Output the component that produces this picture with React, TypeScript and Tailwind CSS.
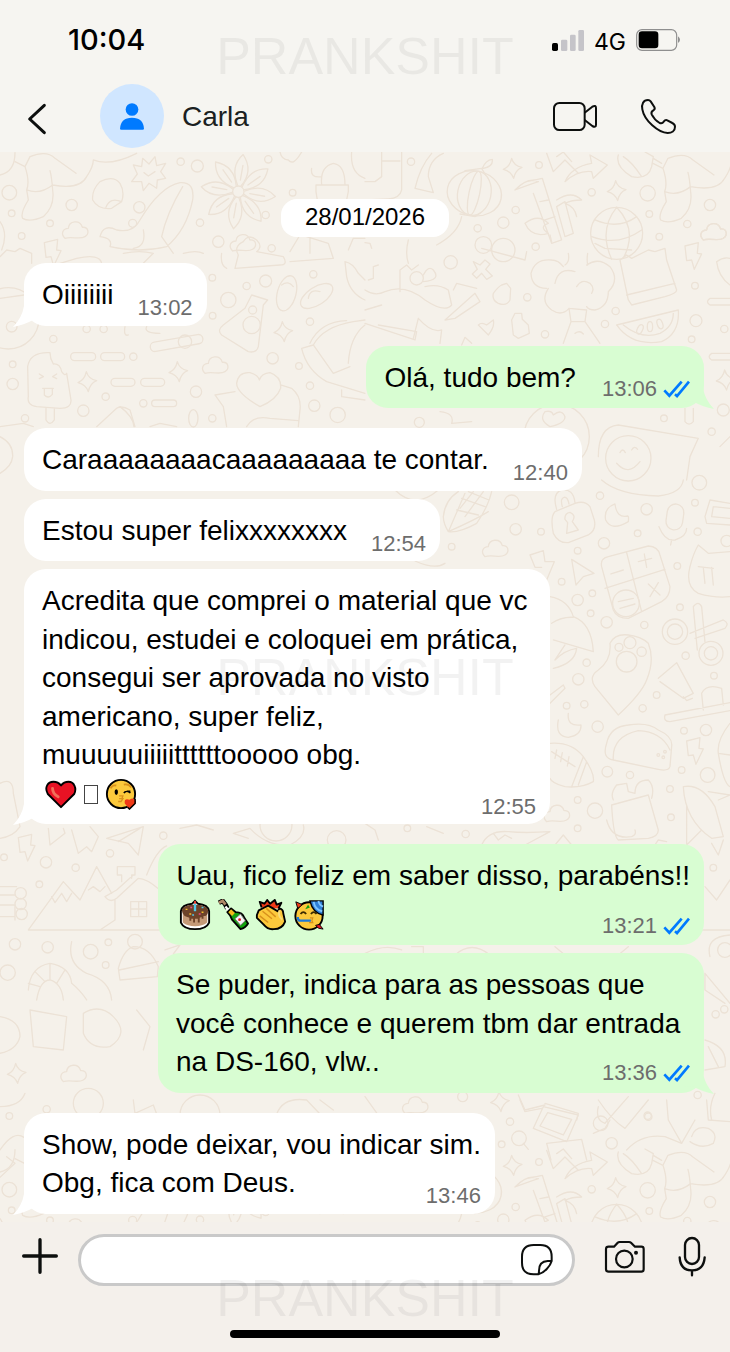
import type { ReactNode } from "react";
import clsx from "clsx";

type EmojiName = "heart" | "missing" | "kiss" | "cake" | "bottle" | "clap" | "party";

interface Message {
  id: number;
  sent?: boolean;
  tail?: boolean;
  wide?: boolean;
  text: string;
  emojis?: EmojiName[];
  time: string;
}

const messages: Message[] = [
  { id: 1, tail: true, text: "Oiiiiiiii", time: "13:02" },
  { id: 2, sent: true, tail: true, text: "Olá, tudo bem?", time: "13:06" },
  { id: 3, wide: true, text: "Caraaaaaaaacaaaaaaaaa te contar.", time: "12:40" },
  { id: 4, text: "Estou super felixxxxxxxx", time: "12:54" },
  {
    id: 5,
    tail: true,
    text: "Acredita que comprei o material que vc indicou, estudei e coloquei em prática, consegui ser aprovada no visto americano, super feliz, muuuuuiiiiittttttooooo obg.",
    emojis: ["heart", "missing", "kiss"],
    time: "12:55",
  },
  {
    id: 6,
    sent: true,
    text: "Uau, fico feliz em saber disso, parabéns!!",
    emojis: ["cake", "bottle", "clap", "party"],
    time: "13:21",
  },
  {
    id: 7,
    sent: true,
    tail: true,
    text: "Se puder, indica para as pessoas que você conhece e querem tbm dar entrada na DS-160, vlw..",
    time: "13:36",
  },
  { id: 8, tail: true, text: "Show, pode deixar, vou indicar sim.\nObg, fica com Deus.", time: "13:46" },
];

/* ---------- Wallpaper ---------- */

type Dot = [number, number, number];

function Scene({ x, y, dots = [], d = "", children }: { x: number; y: number; dots?: Dot[]; d?: string; children?: ReactNode }) {
  return (
    <g transform={`translate(${x} ${y}) scale(.3333)`}>
      {dots.map(([cx, cy, r]) => (
        <circle key={`${cx}-${cy}-${r}`} cx={cx} cy={cy} r={r} />
      ))}
      <path d={d} />
      {children}
    </g>
  );
}

const Sparkle = ({ x, y }: { x: number; y: number }) => (
  <path transform={`translate(${x} ${y})`} d="M-3-30Q3-8 28-3 8 5 3 30-5 8-28 3-8-5-3-30Z" />
);

const Cloud = ({ x, y }: { x: number; y: number }) => (
  <path transform={`translate(${x} ${y})`} d="M-30 25C-45 10-35-5-20-5-18-28 15-32 22-8 40-10 45 10 30 20 15 30-10 18-30 25Z" />
);

const Bolt = ({ x, y }: { x: number; y: number }) => (
  <path transform={`translate(${x} ${y})`} d="M-25-32 15-42 12-10 25-8 3 38-5 10-20 12Z" />
);

const Dog = () => (
  <path d="M45 485 75 500 90 470Q140 450 165 475 200 500 228 520M75 500Q90 545 80 570L85 600Q60 640 68 655 90 668 130 650 165 620 158 570 155 530 150 512M80 570Q120 585 158 555 240 570 260 530 280 500 280 480M280 480Q330 500 410 460" />
);

function TopBand({ y }: { y: number }) {
  return (
    <>
      <Scene
        x={0}
        y={y}
        dots={[[542, 485, 11], [592, 498, 18], [28, 578, 22], [215, 615, 17], [35, 640, 10], [150, 670, 10], [65, 708, 10], [418, 622, 17], [398, 670, 12], [805, 478, 11], [878, 578, 10], [600, 668, 11], [797, 645, 11], [815, 745, 11]]}
        d="M0 525Q45 515 45 458M400 495 425 500 428 475 447 492 465 470 470 497 497 490 482 515 497 535 472 540 470 565 447 550 430 572 425 545 395 545 412 522ZM432 518 445 528 465 515M300 545Q340 525 360 550 375 575 365 605L335 625Q295 630 278 600 275 570 300 545M365 605Q330 590 318 622M300 710Q310 670 350 690 400 700 420 660 480 560 540 548 585 545 578 600 560 690 500 740 420 760 330 740 340 715 300 710M548 560Q500 640 485 710L520 760M430 690Q440 740 400 745M948 555H1045V575L1030 650M948 555V575L960 650M965 553Q960 500 1000 490 1035 495 1035 553M965 530Q930 535 935 505M1055 456Q1050 520 1095 535M840 456Q845 480 865 480 880 500 905 456M0 665Q25 700 5 750"
      >
        <Dog />
        <Cloud x={225} y={690} />
        <Cloud x={728} y={728} />
        <g transform="translate(715 575)">
          <circle r="17" />
          {[10, 55, 100, 145, 190, 235, 280, 325].map((a) => (
            <path key={a} transform={`rotate(${a})`} d="M-5-18Q-38-70-5-112 35-70 5-18M0-35V-80" />
          ))}
        </g>
      </Scene>
      <Scene
        x={365}
        y={y}
        dots={[[138, 485, 11], [522, 495, 10], [680, 577, 11], [848, 580, 23], [452, 630, 11], [415, 668, 17], [338, 685, 11], [1035, 615, 17], [853, 642, 10], [967, 672, 11], [883, 710, 10], [355, 735, 25], [415, 750, 35]]}
        d="M0 545H30L50 530V456M110 456V570Q105 595 70 597L0 600M50 483H105M235 460Q190 480 190 530L205 578 150 565Q165 500 200 460M300 512 350 505 362 525M355 505Q385 500 382 478 362 480 352 505M285 642 330 650 345 640M290 650Q280 700 215 735M485 545 532 535 590 720 560 730 505 580M525 605 550 600M540 660 570 650M450 570Q490 530 520 545 490 555 450 570M600 710 575 620 600 605 625 700ZM575 600Q620 570 650 600 620 600 600 610 630 620 635 650M480 670Q520 640 550 670 520 680 550 700 500 715 480 670M545 460 565 515 600 480 640 520M575 470 595 456 620 485M600 545Q620 500 680 490L675 465 727 495 685 535 680 515Q640 510 600 545M760 465Q750 500 800 530 850 540 860 500L865 470 840 456M775 470Q800 485 830 530M865 475 890 490M690 660Q760 690 815 650M680 710Q760 740 830 690M755 622Q700 690 740 778M755 622Q820 690 775 775"
      >
        <g transform="translate(819 5)">
          <Dog />
        </g>
        <g transform="rotate(12 328 580)">
          <ellipse cx="328" cy="580" rx="82" ry="67" />
          <ellipse cx="328" cy="580" rx="50" ry="67" />
          <ellipse cx="328" cy="580" rx="16" ry="67" />
        </g>
        <circle cx="755" cy="700" r="78" />
        <Sparkle x={443} y={505} />
        <Sparkle x={755} y={572} />
        <Cloud x={1045} y={695} />
      </Scene>
    </>
  );
}

function Wallpaper() {
  return (
    <svg className="absolute inset-0 h-full w-full" aria-hidden="true">
      <defs>
        <pattern id="doodles" width="730" height="1070" patternUnits="userSpaceOnUse">
          <g transform="translate(0 -152)" fill="none" stroke="#ece2d6" strokeWidth="4" strokeLinejoin="round" strokeLinecap="round">
            <TopBand y={0} />
            <TopBand y={997} />
            <Scene
              x={0}
              y={230}
              dots={[[637, 143, 10], [740, 168, 11], [797, 153, 18], [940, 133, 11], [685, 210, 23], [638, 257, 10], [930, 275, 11], [818, 385, 17], [897, 408, 10], [930, 467, 11], [943, 527, 17], [1013, 555, 23], [655, 35, 17], [160, 327, 11], [38, 403, 10], [38, 462, 17], [317, 500, 11], [250, 542, 17], [588, 485, 17], [637, 565, 11], [75, 565, 11], [400, 380, 11], [430, 520, 11], [260, 297, 11], [311, 297, 11], [755, 285, 26], [758, 240, 12], [25, 265, 92], [35, 290, 16]]}
              d="M85 500 83 410Q90 365 150 368 150 385 160 402 180 400 185 425 195 440 200 430L213 510Q215 535 180 535L110 530Q80 525 85 500M138 535V570Q150 590 163 570V535M118 432 130 440 118 446M170 432 158 440 170 446M128 475H160M133 478V495Q145 508 157 493V475M755 195 803 210 790 225 775 350Q770 370 745 365L665 315Q650 300 670 285L735 235ZM1035 95Q1060 100 1075 130L1095 150M1040 140Q1050 190 1095 210M1035 95 1040 140M705 115 715 75Q700 50 730 35 745 10 770 30 790 50 770 65L850 80Q865 105 840 105ZM665 70Q660 105 680 115M780 530Q710 490 710 460 715 425 750 428 775 435 778 450 785 430 810 428 845 440 842 475 830 510 780 530M645 495 705 485M842 465 875 475Q905 500 900 540L895 590M645 495 670 530 680 590M740 590Q760 555 810 565L895 572M905 355 940 345Q970 290 1060 275L1095 270M905 355Q920 420 980 455L1095 490M940 345 1000 430 1050 410M1045 400Q1050 320 1095 285M930 340Q960 275 1040 272M1025 480V500L1095 510M290 590 350 535Q365 525 390 540L405 590M360 530Q400 560 402 590M0 80 20 60 45 65 60 55 95 70V100M0 590 70 580 100 590M0 620Q40 640 38 680 35 710 0 730M370 70Q420 60 460 70L430 100M550 70Q590 60 610 70M870 65 900 15 920 20 985 40 1000 85 870 95M930 20V70M1045 60 1060 25H1095M375 290Q370 320 385 315M440 290Q430 310 480 310M180 100 230 85Q300 70 305 100M0 205 72 195M450 590 480 580 530 590"
            >
              <rect x="212" y="368" width="75" height="24" rx="12" />
              <rect x="302" y="368" width="72" height="24" rx="12" />
              <rect x="333" y="445" width="72" height="24" rx="12" />
              <rect x="422" y="445" width="72" height="24" rx="12" />
              <rect x="455" y="510" width="75" height="20" rx="10" />
              <rect x="450" y="325" width="160" height="28" rx="14" transform="rotate(-10 530 340)" />
              <circle cx="555" cy="335" r="20" />
              <ellipse cx="860" cy="190" rx="28" ry="54" transform="rotate(15 860 190)" />
              <ellipse cx="950" cy="198" rx="55" ry="27" transform="rotate(-33 950 198)" />
              <ellipse cx="580" cy="565" rx="14" ry="26" />
              <path d="M845 165Q865 150 880 170M925 205Q930 175 960 185" />
              <Sparkle x={262} y={455} />
              <Sparkle x={535} y={425} />
              <Sparkle x={850} y={305} />
              <Cloud x={645} y={405} />
              <Bolt x={158} y={70} />
            </Scene>
            <Scene
              x={365}
              y={230}
              dots={[[257, 97, 20], [512, 50, 11], [487, 202, 11], [752, 243, 11], [720, 282, 11], [540, 313, 11], [993, 272, 18], [980, 328, 10], [1078, 297, 11], [990, 167, 10], [163, 577, 15], [897, 565, 10], [1075, 540, 18], [1040, 605, 11], [155, 145, 20], [575, 620, 98], [790, 685, 68]]}
              d="M545 175Q500 175 498 130 510 85 560 90 580 90 595 110M610 70Q615 95 600 105M668 70Q665 90 668 105M550 175Q525 215 560 240 590 260 612 235M570 160Q580 110 630 125M635 170Q650 145 675 160 690 175 680 190M665 105Q700 80 735 110 765 150 730 185M730 185Q730 230 690 240 670 240 665 230M612 235 665 240 660 275H618ZM618 275 595 340M660 275 705 340M630 310Q645 300 655 312M765 90 785 75 800 85 850 60 870 65 900 55 905 90 935 180Q935 190 900 200L800 225 790 210ZM785 195 930 160M755 285 940 240Q945 310 890 335 800 350 755 285M775 285Q830 330 885 310 925 290 925 250M325 95 345 105 360 90 375 102 362 118 382 138 365 148 350 130 335 145 322 132 337 118ZM385 190Q400 170 410 165L425 160 437 175 435 210Q425 230 400 220 380 210 385 190M440 270 450 250H470L472 268 490 285 493 310 460 325 445 315ZM340 285Q350 275 365 285L385 270Q390 290 370 315ZM290 345 300 322 320 340M0 180Q30 200 60 185 120 160 180 210 240 250 260 225L250 180Q220 160 180 170M105 185V120L125 105 140 120 160 105M130 30Q120 70 130 100M175 155Q230 150 205 120 190 105 175 135M240 270 330 190 345 215 270 265ZM265 180 275 160 335 175M160 265Q200 310 230 300L225 340M160 265 145 325M0 280 150 330 155 305 40 285M0 240 50 225M0 38 15 40 20 55M1095 205H1035Q1020 215 1035 225H1095M1095 370H1040Q1025 380 1040 390H1095M960 535V575Q972 590 985 575V535M700 680Q700 590 760 585L1000 625 975 680 965 750M765 668Q773 652 781 668M800 660Q808 645 818 658M755 700Q790 740 825 695M555 590Q520 570 540 545 560 540 565 555 590 535 600 560 600 580 555 590M225 545Q270 550 260 580L320 575M1065 650 1095 620M1055 95Q1075 80 1095 85M1055 95Q1060 140 1095 165M10 150 25 145V110L40 105M560 35 555 15M690 40 720 55 800 60M350 55 480 90 485 65"
            >
              <Sparkle x={1082} y={450} />
              <Bolt x={985} y={80} />
              <Cloud x={1045} y={5} />
              <ellipse cx="825" cy="298" rx="8" ry="15" transform="rotate(25 825 298)" />
              <ellipse cx="855" cy="290" rx="8" ry="15" />
              <ellipse cx="885" cy="282" rx="8" ry="15" transform="rotate(-20 885 282)" />
            </Scene>
            <Scene
              x={365}
              y={480}
              dots={[[440, 67, 22], [452, 148, 17], [528, 155, 10], [705, 47, 11], [845, 88, 17], [990, 68, 10], [818, 160, 10], [998, 155, 11], [717, 190, 17], [638, 212, 10], [260, 200, 10], [937, 258, 10], [590, 305, 10], [638, 360, 17], [682, 340, 10], [677, 400, 10], [725, 427, 17], [838, 435, 11], [945, 382, 10], [665, 548, 11], [640, 598, 17], [605, 677, 10], [658, 673, 11], [962, 527, 11], [1047, 587, 10], [875, 645, 10], [833, 685, 11], [698, 740, 17], [1003, 8, 22], [1085, 183, 17], [930, 455, 38], [930, 455, 23], [1038, 520, 36], [1038, 520, 20], [785, 545, 31], [795, 488, 18], [830, 515, 14], [762, 502, 12], [783, 370, 40]]}
              d="M235 110Q240 60 280 35M380 35Q370 80 335 130 280 160 250 155 235 130 235 110M250 155 300 40M250 155Q330 120 370 95M290 55 360 80M310 35 372 60M275 90 340 105M355 35 300 110M325 35 285 85M570 95Q555 110 565 160 580 190 610 188L670 165Q695 150 688 120L675 80Q660 60 630 70ZM575 88Q560 40 590 30 625 25 630 68M592 80Q585 55 597 52 608 50 612 72M608 128 605 160 640 150 622 125Q635 105 615 97 598 100 600 118ZM750 72Q715 85 722 120 740 155 790 125 792 108 788 108 755 115 750 72M882 140Q900 185 930 180 965 170 965 145M920 180 917 195M495 225 535 212 540 245 568 245 545 300M495 225 510 262 530 262M620 238 687 280 655 290 633 315ZM710 260Q705 235 730 230L850 198Q880 200 885 225L915 320Q915 350 890 365L790 415Q755 415 745 390ZM785 218 830 395M720 325 900 268M738 282 775 270M838 222 845 262M820 245 860 235M850 312 885 345M880 308 855 350M760 365 805 355M765 385 810 372M975 260Q985 220 1000 195L1030 220 1095 215M975 260Q960 320 1000 340 1050 355 1095 350M1000 260 1045 265M1015 262 1020 310M1040 262 1045 315M975 460 1075 420Q1095 430 1080 445L990 475M985 380Q1000 360 1010 380L1020 485M985 380 997 510M555 350Q610 360 625 410 680 430 685 515L565 480M560 430Q590 410 625 412M570 540Q600 510 635 505 630 550 565 565M600 495 570 540M735 490Q750 460 790 465 830 470 850 490 870 540 845 600 830 640 760 705L690 620Q670 590 700 570 740 540 735 490M880 595 935 548 985 640 955 655 885 605M955 650 965 662 982 655M900 705 1095 668M900 705Q895 725 915 725L1095 692M1015 690 1010 640Q1025 610 1070 625L1075 675M555 645 595 615 600 625 555 670M1020 110 1035 60 1095 70M1020 110 1025 130 1095 135M1045 80 1095 85M1045 80 1040 110 1095 115M710 0Q760 45 880 48 950 40 955 0M90 30Q150 90 220 30M150 243Q210 270 240 250"
            >
              <rect x="905" y="72" width="50" height="78" rx="25" transform="rotate(8 930 110)" />
              <Cloud x={390} y={205} />
            </Scene>
            <Scene
              x={365}
              y={720}
              dots={[[957, 32, 10], [1023, 30, 17], [727, 155, 16], [795, 165, 11], [950, 150, 10], [1028, 165, 22], [915, 207, 10], [638, 240, 10], [690, 272, 23], [918, 292, 10], [638, 325, 10], [302, 342, 11], [127, 325, 10], [1045, 443, 10], [880, 105, 4], [900, 95, 4], [895, 112, 4], [1080, 690, 22]]}
              d="M745 120Q710 115 725 70 735 20 790 15 850 5 880 30 925 50 920 80L915 140Q910 155 880 148L745 120Q740 50 820 32 890 35 915 90M555 70Q620 65 655 110 690 160 685 185 650 205 600 200 560 190 555 175M560 95 630 140M575 90 570 115M592 98 587 125M612 110 607 138M655 110 620 200M665 125 640 195M580 0Q570 50 610 52 650 45 648 15 605 20 610-20M740 255 850 225 880 330Q880 350 850 355L760 360Q745 350 740 255ZM745 240Q735 220 755 195L785 190 790 215 810 220Q810 180 850 180 870 200 860 235M725 300Q740 360 800 350 815 345 810 330M955 200Q1010 190 1050 260L1075 350 1040 355Q960 300 955 200M965 255V375L1010 330M1060 240 1095 225M1030 215 1095 225M1040 370 1060 405 1075 360M350 375Q370 330 430 335 480 340 555 335L480 375M385 340 400 360 420 345 440 355M570 375 595 345 620 375M1095 10Q1055 60 1060 100 1075 190 1095 200M1060 100 1095 105M1010 630H1095M1020 500 1055 540 1095 480M1035 710Q1020 650 1095 645M870 375 880 360 905 365M185 320 235 340M0 310 30 330 40 360M0 700Q60 670 110 690M140 680H175V705M270 705Q320 660 375 705M570 680 600 705M760 705 790 680"
            >
              <Bolt x={990} y={95} />
              <Cloud x={575} y={280} />
            </Scene>
            <Scene
              x={0}
              y={750}
              dots={[[490, 257, 11], [138, 337, 17], [227, 353, 11], [12, 322, 10], [330, 310, 11], [118, 403, 10], [45, 583, 17], [143, 592, 17], [272, 605, 22], [325, 577, 10], [317, 645, 10], [23, 668, 23], [828, 225, 48], [1010, 270, 28], [405, 575, 22], [62, 430, 17], [62, 462, 17], [65, 492, 17]]}
              d="M85 540 190 395 240 450 290 350 335 430M85 540H480M155 440 165 458 185 430 200 455 215 430M265 420 280 410 300 425 315 410M315 440Q330 460 350 445L415 385Q440 385 480 420M315 440 350 420 400 375M345 450V510L300 540M365 395V375H352V350H405V375H395V385M392 455H440V500H392ZM416 455V500M392 477H440M320 265 430 230 415 315 385 280ZM355 275 420 235M145 235 150 285 195 250 190 235M215 240 235 310 260 290 275 305 295 260 270 230M700 250 750 235Q800 290 870 285 920 260 910 225M700 250 745 265M0 100Q40 80 40 130L60 230Q40 260 0 265M0 410H50M0 435H45M0 465H45V510M0 500H45M85 720Q90 650 150 640 210 650 215 700 240 720 260 750M110 750Q120 690 150 690 185 700 190 750M85 700 120 710M105 665 135 695M150 640V690M195 660 170 700M355 655Q370 600 400 590 450 590 475 650L472 680 360 690ZM358 660 475 635M215 575Q200 640 260 670 330 690 335 750M440 375Q470 300 500 288M540 235 590 225 640 240M495 600 540 585 520 612M0 800Q60 810 60 860 50 900 0 910M90 780 200 800 190 900 100 890ZM250 790Q300 760 340 800 390 850 330 890 270 900 250 850ZM410 780 450 830 430 900"
            >
              <Bolt x={80} y={295} />
              <Sparkle x={50} y={970} />
              <Cloud x={220} y={970} />
            </Scene>
            <Scene
              x={0}
              y={1100}
              dots={[[28, 48, 10], [265, 10, 45], [600, 45, 60], [140, 28, 11]]}
              d="M400 0 405 40 460 15 470 42M830 42Q850-10 920 0L960 42M960 0 1000 30M0 150Q40 90 72 112M0 232 45 190 20 170M0 20Q60 20 75-20"
            />
            <Scene
              x={365}
              y={920}
              dots={[[1078, 268, 11], [1052, 283, 11], [998, 525, 11], [850, 590, 11], [293, 530, 15]]}
              d="M1020 160 1095 250M1020 160V210L1080 250M1020 360Q1090 380 1080 440L1020 450M1030 380 1060 440M1050 520Q1030 560 1040 600M460 525 480 570 540 555M540 550 640 580 635 600M700 560Q690 600 720 610L790 530M0 530 50 600"
            >
              <Cloud x={150} y={555} />
              <Sparkle x={405} y={545} />
            </Scene>
            <Scene
              x={365}
              y={1100}
              dots={[[435, 65, 11], [410, 133, 10], [740, 130, 17], [848, 47, 11], [462, 115, 22], [707, 70, 22]]}
              d="M535 20 640 45 605 125 505 85ZM548 38 620 58 595 105 525 78ZM475 130 490 148M545 130 650 118 665 180M545 130 558 180M465 0 480 35 530 25M700 0Q740 60 780 85L850 0M685 100 720 85 735 60M905 0 910 60 950 130 990 60M1025 0 1030 60 1095 65M980 110Q990 75 1030 85 1060 100 1045 130 1010 150 975 125M785 150Q830 100 900 110L950 130"
            />
          </g>
        </pattern>
      </defs>
      <rect width="100%" height="100%" fill="url(#doodles)" />
    </svg>
  );
}

/* ---------- Emojis ---------- */

const emojiArt: Record<Exclude<EmojiName, "missing">, { label: string; art: ReactNode }> = {
  heart: {
    label: "❤️",
    art: (
      <>
        <path d="M17 31 3 17C-1 10 3 4 9 4Q14 4 17 8 20 4 25 4C31 4 34 11 31 17Z" fill="#e81224" stroke="#000" strokeWidth="2" strokeLinejoin="round" />
        <path d="M8 11Q8 17 14 20" stroke="#f0705a" strokeWidth="3" fill="none" strokeLinecap="round" />
      </>
    ),
  },
  kiss: {
    label: "😘",
    art: (
      <>
        <circle cx="17" cy="17" r="15" fill="#fcc93c" stroke="#000" strokeWidth="2" />
        <path d="M6 11Q8 7 12 8M20 7Q25 6 28 10" stroke="#d8901c" strokeWidth="2" fill="none" />
        <ellipse cx="12" cy="15" rx="1.8" ry="3" />
        <path d="M20 16Q23 12 27 16M23 14H27" stroke="#000" strokeWidth="1.6" fill="none" />
        <path d="M15 19H19L18 22H15M15 22H19L17 25H14" stroke="#d8901c" strokeWidth="1.4" fill="none" />
        <path d="M26 33 21 27Q20 21 26 23 31 20 33 25L32 28Z" fill="#f03a17" />
        <path d="m24 31 2 2 6-6V22" stroke="#000" strokeWidth="1.6" fill="none" />
      </>
    ),
  },
  cake: {
    label: "🎂",
    art: (
      <>
        <path d="M2 13Q3 6 14 5L17 2 20 5Q31 6 32 13V25Q29 32 17 32 5 32 2 25Z" fill="#fff" stroke="#000" strokeWidth="2" />
        <path d="M4 15H30V25Q25 29 17 29 9 29 4 25Z" fill="#c59a78" />
        <path d="M3 12Q4 6 17 6 30 6 31 12 31 17 28 18H26V21H24V19L22 20V25H20V21H17V25H15V21H13V23H11V20L6 18Q3 15 3 12Z" fill="#6d432a" />
        <path d="M17 5V13" stroke="#50c8e8" strokeWidth="2.5" />
        <path d="M17 2V5" stroke="#e83a2d" strokeWidth="2" />
        <path d="M7 11H9M24 14H26M11 16H13" stroke="#f5c02c" strokeWidth="1.5" />
        <path d="M12 9H14M21 16H23" stroke="#e74b87" strokeWidth="1.5" />
        <path d="M24 9H26M14 17H16" stroke="#50c8e8" strokeWidth="1.5" />
      </>
    ),
  },
  bottle: {
    label: "🍾",
    art: (
      <>
        <path d="M2 4 6 2 9 6 11 10" stroke="#000" strokeWidth="5" fill="none" strokeLinejoin="round" />
        <path d="M2 4 6 2 9 6" stroke="#b08968" strokeWidth="3" fill="none" />
        <path d="M9 8 13 13" stroke="#fff" strokeWidth="2.5" />
        <path d="M11 14 15 10 20 14Q27 14 29 20L33 26Q30 31 25 32L16 22Q15 18 11 14Z" fill="#13a10e" stroke="#000" strokeWidth="2" strokeLinejoin="round" />
        <path d="M12 14 15 11 19 15 16 18Z" fill="#f5b81c" />
        <path d="m19 21 6-5 5 7-5 5Z" fill="#f5f5f5" stroke="#777" strokeWidth="1" />
        <circle cx="24" cy="22" r="1.5" fill="#e81224" />
      </>
    ),
  },
  clap: {
    label: "👏",
    art: (
      <>
        <path d="M7 9 5 3 10 5 13 1 16 5 21 1 23 6 28 4 25 10" fill="#f03a17" stroke="#000" strokeWidth="2" strokeLinejoin="round" />
        <path d="M2 17 4 12 10 9 14 7 19 10 24 13 26 10Q30 11 30 15L32 24Q29 32 20 32 14 33 9 27L2 20Z" fill="#fcc93c" stroke="#000" strokeWidth="2" strokeLinejoin="round" />
        <path d="M8 13 18 21M12 10 22 19M5 18 14 25" stroke="#d8901c" strokeWidth="1.6" />
        <path d="M26 12Q24 18 29 22" stroke="#f8dc7c" strokeWidth="2" fill="none" />
      </>
    ),
  },
  party: {
    label: "🥳",
    art: (
      <>
        <circle cx="17" cy="18" r="14.5" fill="#fcc93c" stroke="#000" strokeWidth="2" />
        <path d="M18 2H32V17Q21 15 18 2Z" fill="#2f80d8" stroke="#000" strokeWidth="1.5" />
        <path d="M22 3Q23 11 31 13M27 2Q28 7 32 8" stroke="#7cc4ff" strokeWidth="2" fill="none" />
        <path d="m3 3 7 3-5 4Z" fill="#f03a17" stroke="#000" />
        <path d="m13 11 3-5 2 3Z" fill="#16a20f" />
        <path d="M8 16Q11 12 14 16M19 16Q22 12 25 16" stroke="#3d2b00" strokeWidth="1.8" fill="none" />
        <path d="M19 23H8Q5 23 5 19" stroke="#1d7ad9" strokeWidth="2.5" fill="none" />
        <path d="M18 20H21L20 23 21 25H17" stroke="#d8901c" strokeWidth="1.3" fill="none" />
        <path d="m24 28 4-1 4 5-5-1Z" fill="#e81224" stroke="#000" />
      </>
    ),
  },
};

function Emoji({ name }: { name: EmojiName }) {
  if (name === "missing") return <span className="mx-1 inline-block h-[19px] w-[14px] border border-[#444] align-[-1px]" />;
  const { label, art } = emojiArt[name];
  return (
    <svg viewBox="0 0 34 34" role="img" aria-label={label} className="mx-[3px] inline-block h-8 w-8 align-[-7px]">
      {art}
    </svg>
  );
}

/* ---------- Bubbles ---------- */

function Ticks() {
  return (
    <svg viewBox="895 444 81 54" className="h-[18px] w-[27px]" fill="none" stroke="#007aff" strokeWidth="8" aria-hidden="true">
      <path d="M899 475 914 491 951 449M931 487 937 492 973 449" />
    </svg>
  );
}

function Tail({ sent }: { sent?: boolean }) {
  return (
    <svg
      viewBox="0 0 30 26"
      aria-hidden="true"
      className={clsx("absolute -bottom-px h-[26px] w-[30px]", sent ? "-right-[10px] -scale-x-100" : "-left-[11px]")}
    >
      <path d="M11 0V5Q9 17 0 26 11 24 20 19L30 18V0Z" fill={sent ? "#d8fdd2" : "#fff"} />
    </svg>
  );
}

function Bubble({ message }: { message: Message }) {
  const { sent, tail, wide, text, emojis, time } = message;
  return (
    <li
      className={clsx(
        "relative rounded-[22px] pt-[13px] pr-[14px] pb-[11px] pl-[18px]",
        sent ? "max-w-[546px] self-end bg-[#d8fdd2]" : "self-start bg-white",
        !sent && (wide ? "max-w-[562px]" : "max-w-[526px]"),
        tail ? "mb-5 last:mb-0" : "mb-2",
      )}
    >
      {tail && <Tail sent={sent} />}
      <div className="relative text-[28px] leading-snug whitespace-pre-line text-black">
        {text}
        {emojis && <br />}
        {emojis?.map((name) => (
          <Emoji key={name} name={name} />
        ))}
        <span
          className={clsx(
            "float-right -mb-3 flex items-center gap-[6px] text-[22px] leading-6 text-[#6d6d6d]",
            sent ? "mt-[18px] ml-[26px]" : "mt-5 ml-6",
          )}
        >
          <time>{time}</time>
          {sent && <Ticks />}
        </span>
      </div>
    </li>
  );
}

/* ---------- Bars ---------- */

function StatusBar() {
  return (
    <div className="flex h-20 items-center justify-between pr-[50px] pl-[68px] font-['Inter',sans-serif] text-black">
      <span className="text-[29px] font-medium">10:04</span>
      <div className="flex items-center">
        <svg viewBox="561 90 96 63" className="h-[21px] w-8" fill="#c5c4c9" aria-hidden="true">
          <rect x="561" y="129" width="18" height="24" rx="5" fill="#000" />
          <rect x="588" y="119" width="19" height="34" rx="4" />
          <rect x="615" y="104" width="17" height="49" rx="4" />
          <rect x="640" y="90" width="17" height="63" rx="4" />
        </svg>
        <span className="mt-1 mr-[10px] ml-[10px] text-[23px] leading-6">4G</span>
        <svg viewBox="813 90 132 66" className="h-[22px] w-11" aria-hidden="true">
          <rect x="815" y="92" width="120" height="62" rx="16" fill="none" stroke="#8f8f8f" strokeWidth="3.5" />
          <rect x="821" y="97" width="59" height="51" rx="10" />
          <path d="M939 112Q951 122 939 132Z" fill="#8f8f8f" />
        </svg>
      </div>
    </div>
  );
}

function ChatHeader() {
  return (
    <header className="bg-[#f6f5f1]">
      <StatusBar />
      <div className="flex h-[72px] items-center pr-[52px] pl-[27px]">
        <button aria-label="Voltar" className="pt-[6px]">
          <svg viewBox="81 309 60 96" className="h-8 w-5" fill="none" stroke="#0d0f0e" strokeWidth="9" strokeLinecap="round" strokeLinejoin="round">
            <path d="M133 316 89 357 133 398" />
          </svg>
        </button>
        <div className="ml-[53px] flex size-16 items-center justify-center rounded-full bg-[#d0e6ff]">
          <svg viewBox="357 304 78 86" className="h-[29px] w-[26px]" fill="#007aff" aria-hidden="true">
            <circle cx="396" cy="326" r="19" />
            <path d="M360 384Q362 351 396 351T432 384Q432 387 428 387H364Q360 387 360 384Z" />
          </svg>
        </div>
        <h1 className="ml-[18px] flex-1 pt-[2px] text-[28px] text-[#1b1f22]">Carla</h1>
        <div className="flex items-center gap-10">
          <button aria-label="Chamada de vídeo">
            <svg viewBox="558 300 144 99" className="h-[33px] w-12" fill="none" stroke="#0d0f0e" strokeWidth="6" strokeLinejoin="round">
              <rect x="567" y="309" width="92" height="81" rx="16" />
              <path d="M659 338 682 320Q693 314 693 324V374Q693 384 682 378L659 360" />
            </svg>
          </button>
          <button aria-label="Chamada de voz">
            <svg viewBox="822 291 117 117" className="size-[39px]" fill="none" stroke="#0d0f0e" strokeWidth="6" strokeLinejoin="round">
              <path d="M849 300C835 300 829 312 832 328 838 362 880 398 908 399 920 399 930 393 930 380 930 374 926 371 922 369L907 361C903 359 899 361 896 365 893 370 889 371 884 369 874 363 866 355 860 343 858 338 860 334 865 331 869 329 870 325 868 321L857 304Q854 300 849 300Z" />
            </svg>
          </button>
        </div>
      </div>
    </header>
  );
}

function Composer() {
  return (
    <footer className="bg-[#f4f0eb] pt-3">
      <form className="flex items-start pr-[23px] pl-[22px]" onSubmit={(e) => e.preventDefault()}>
        <button type="button" aria-label="Anexar" className="flex h-11 items-center">
          <svg viewBox="66 414 108 108" className="size-9" stroke="#0d0f0e" strokeWidth="10" strokeLinecap="round">
            <path d="M120 419V517M71 468H169" />
          </svg>
        </button>
        <div className="mr-[29px] ml-5 flex h-[52px] min-w-0 flex-1 items-center rounded-full border-[3px] border-[#c9c9c9] bg-white pr-[18px] pl-5">
          <input type="text" aria-label="Mensagem" className="min-w-0 flex-1 bg-transparent text-[28px] outline-none" />
          <button type="button" aria-label="Figurinhas">
            <svg viewBox="462 432 102 102" className="size-[34px]" fill="none" stroke="#0d0f0e" strokeWidth="6" strokeLinejoin="round">
              <path d="M517 526H503Q468 526 468 491V473Q468 438 503 438H523Q557 438 557 473V486C553 501 535 522 517 526ZM557 486H545Q519 487 519 515 519 522 517 526" />
            </svg>
          </button>
        </div>
        <button type="button" aria-label="Câmera" className="flex h-11 items-center">
          <svg viewBox="717 420 123 99" className="h-[33px] w-[41px]" fill="none" stroke="#0d0f0e" strokeWidth="6.5" strokeLinejoin="round">
            <path d="M723 508V447Q723 440 731 440H747L758 428Q760 426 764 426H792Q796 426 798 428L810 440H829Q836 440 836 447V508Q836 515 829 515H731Q723 515 723 508Z" />
            <circle cx="778" cy="477" r="25" />
            <circle cx="813" cy="458" r="6" fill="#0d0f0e" stroke="none" />
          </svg>
        </button>
        <button type="button" aria-label="Gravar áudio" className="ml-8 flex h-11 items-center">
          <svg viewBox="936 405 90 123" className="h-[41px] w-[30px]" fill="none" stroke="#0d0f0e" strokeWidth="7" strokeLinecap="round">
            <rect x="960" y="411" width="42" height="78" rx="21" />
            <path d="M944 469Q946 508 981 508T1019 469M981 508V523" />
          </svg>
        </button>
      </form>
      <div className="mx-auto mt-11 mb-[14px] h-2 w-[270px] rounded-full bg-black" />
    </footer>
  );
}

function Watermark() {
  return (
    <div className="pointer-events-none absolute inset-0 flex flex-col items-center justify-between pt-[30px] pb-7 text-[52px] leading-none text-black/5">
      <span>PRANKSHIT</span>
      <span>PRANKSHIT</span>
      <span>PRANKSHIT</span>
    </div>
  );
}

export default function App() {
  return (
    <div className="relative flex min-h-screen flex-col font-['Liberation_Sans',Arial,sans-serif]">
      <ChatHeader />
      <main className="relative flex-1 bg-[#f5f1ea] px-6 pt-[47px] pb-2">
        <Wallpaper />
        <div className="relative flex flex-col">
          <div className="mb-[26px] self-center rounded-2xl bg-white px-6 pb-[2px] text-[24px] leading-9 text-black">28/01/2026</div>
          <ul className="flex flex-col pr-[2px]">
            {messages.map((m) => (
              <Bubble key={m.id} message={m} />
            ))}
          </ul>
        </div>
      </main>
      <Composer />
      <Watermark />
    </div>
  );
}
